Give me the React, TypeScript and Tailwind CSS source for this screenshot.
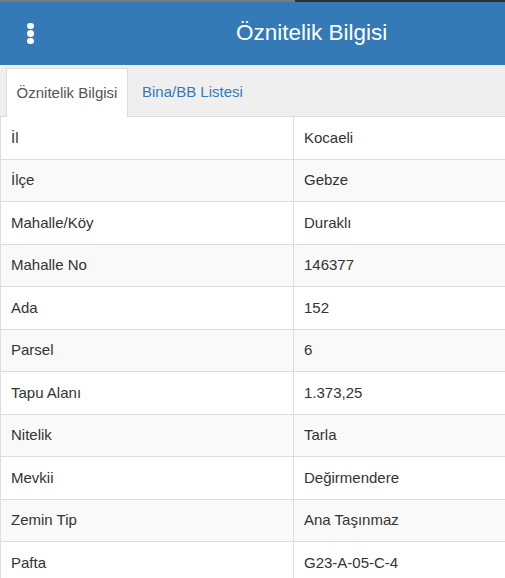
import React from "react";

const rows: [string, string][] = [
  ["İl", "Kocaeli"],
  ["İlçe", "Gebze"],
  ["Mahalle/Köy", "Duraklı"],
  ["Mahalle No", "146377"],
  ["Ada", "152"],
  ["Parsel", "6"],
  ["Tapu Alanı", "1.373,25"],
  ["Nitelik", "Tarla"],
  ["Mevkii", "Değirmendere"],
  ["Zemin Tip", "Ana Taşınmaz"],
  ["Pafta", "G23-A-05-C-4"],
];

export default function App() {
  return (
    <div className="w-[505px] h-[578px] overflow-hidden bg-white font-['Liberation_Sans',Arial,sans-serif]">
      <div className="flex h-[2px]">
        <div className="w-[295px] bg-[#7a7a7a]" />
        <div className="flex-1 bg-[#2f2f2f]" />
      </div>
      <div className="h-[63px] bg-[#337ab7] flex items-center">
        <div className="w-[60px] flex flex-col items-center gap-[1px] pl-[1px]">
          <span className="block w-[6.5px] h-[6.5px] rounded-full bg-white" />
          <span className="block w-[6.5px] h-[6.5px] rounded-full bg-white" />
          <span className="block w-[6.5px] h-[6.5px] rounded-full bg-white" />
        </div>
        <div className="flex-1 text-white text-[22.5px] pl-[176px] pb-[1px]">Öznitelik Bilgisi</div>
      </div>
      <div className="h-[52px] bg-[#efefef] border-b border-[#dddddd] flex items-end pl-[6px]">
        <div className="w-[122px] h-[49px] bg-white border border-b-0 border-[#dddddd] -mb-px flex items-center justify-center text-[15px] text-[#555555] pt-[1px]">
          Öznitelik Bilgisi
        </div>
        <div className="h-[49px] flex items-center pl-[14px] text-[15px] text-[#337ab7] pt-[1px]">
          Bina/BB Listesi
        </div>
      </div>
      <div className="border-l border-[#dddddd]">
        {rows.map(([k, v], i) => (
          <div
            key={k}
            className={`flex h-[42.5px] border-b border-[#dddddd] text-[15px] text-[#333333] ${
              i % 2 === 1 ? "bg-[#f9f9f9]" : "bg-white"
            }`}
          >
            <div className="w-[293px] border-r border-[#dddddd] flex items-center pl-[10px]">{k}</div>
            <div className="flex-1 flex items-center pl-[10px]">{v}</div>
          </div>
        ))}
      </div>
    </div>
  );
}
